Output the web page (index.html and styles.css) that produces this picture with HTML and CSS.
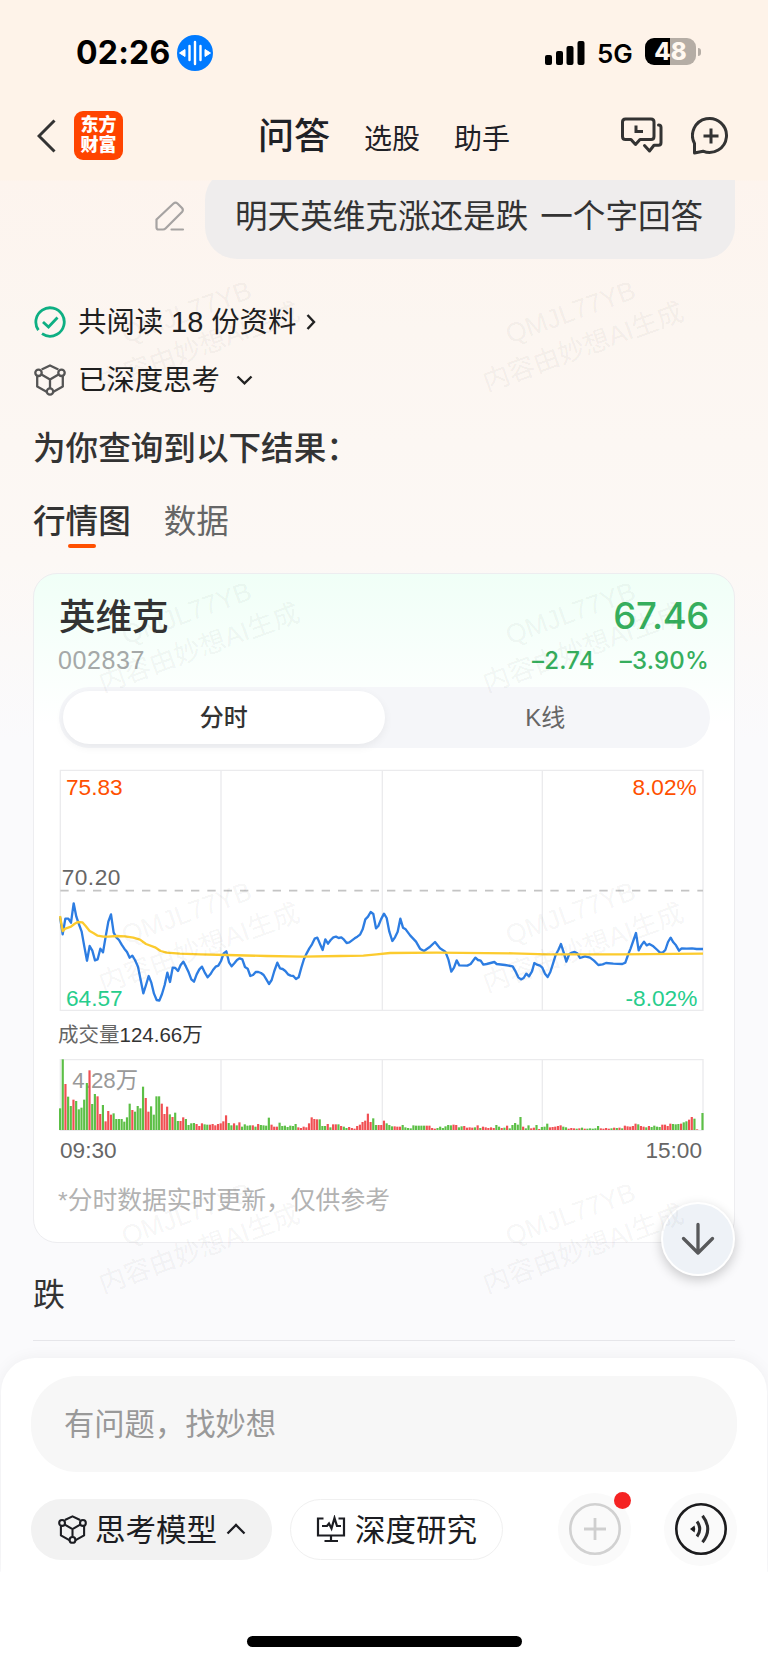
FILE: index.html
```html
<!DOCTYPE html>
<html lang="zh-CN">
<head>
    <meta charset="UTF-8">
    <meta name="viewport" content="width=device-width, initial-scale=1.0">
    <title>妙想问答</title>
    <link rel="stylesheet" href="styles.css">
</head>
<body>
    <svg width="0" height="0" class="defs">
        <symbol id="cube" viewBox="0 0 32 32">
            <g fill="none" stroke="currentColor" stroke-width="2.3" stroke-linejoin="round">
                <path d="M7.600 5.500 L16 1.500 L24.400 5.500 M3.200 12 V22.500 L13 28 M28.800 12 V22.500 L19 28 M7.500 10.600 L16 15.600 L24.500 10.600 M16 15.600 V24"/>
                <circle cx="4.500" cy="8.800" r="3.200"/>
                <circle cx="27.500" cy="8.800" r="3.200"/>
                <circle cx="16" cy="27.500" r="3.200"/>
            </g>
        </symbol>
    </svg>

    <header class="header">
        <div class="status">
            <span class="time">02:26</span>
            <svg class="voice-badge" width="36" height="36" viewBox="0 0 36 36">
                <circle cx="18" cy="18" r="18" fill="#007aff"/>
                <path d="M12.500 11 V25 M18 7 V29 M23.500 11 V25" stroke="#fff" stroke-width="2.4" stroke-linecap="round"/>
                <path d="M2.500 18 L8 14.500 V21.500 Z M33.500 18 L28 14.500 V21.500 Z" fill="#fff" stroke="#fff" stroke-linejoin="round"/>
            </svg>
            <svg class="signal" width="40" height="24" viewBox="0 0 40 24">
                <rect x="0" y="14" width="7" height="10" rx="2"/>
                <rect x="11" y="10" width="7" height="14" rx="2"/>
                <rect x="21.500" y="5" width="7" height="19" rx="2"/>
                <rect x="32.500" y="0" width="7" height="24" rx="2"/>
            </svg>
            <span class="network">5G</span>
            <span class="battery">48</span>
            <span class="battery-tip"></span>
        </div>
        <nav class="nav">
            <svg class="back" width="20" height="34" viewBox="0 0 20 34">
                <path d="M17.500 1.500 L2 17 L17.500 32.500" fill="none" stroke="#333" stroke-width="3"/>
            </svg>
            <div class="logo">东方<br>财富</div>
            <span class="nav-item current">问答</span>
            <span class="nav-item">选股</span>
            <span class="nav-item">助手</span>
            <svg class="history" width="44" height="38" viewBox="0 0 44 38">
                <g fill="none" stroke="#333" stroke-width="3" stroke-linejoin="round" stroke-linecap="round">
                    <path d="M5.500 2 H31 Q34 2 34 5 V19.500 Q34 22.500 31 22.500 H20 L15.500 27.500 L11 22.500 H5.500 Q2.500 22.500 2.500 19.500 V5 Q2.500 2 5.500 2 Z"/>
                    <path d="M38.500 8 Q41 8 41 10.500 V25.500 Q41 28.300 38.500 28.300 H34 L29.500 34 L24.500 28.500"/>
                    <path d="M16 8.500 V14.500 H23" stroke-linejoin="miter" stroke-linecap="butt"/>
                </g>
            </svg>
            <svg class="new-chat" width="40" height="40" viewBox="0 0 40 40">
                <path d="M3.500 27.500 A17 17 0 1 1 12 35.200 L3.500 37 Z" fill="none" stroke="#333" stroke-width="3" stroke-linejoin="round"/>
                <path d="M20 12.500 V27.500 M12.500 20 H27.500" stroke="#333" stroke-width="3"/>
            </svg>
        </nav>
    </header>

    <main class="chat">
        <div class="question">
            <svg class="edit" width="30" height="30" viewBox="0 0 30 30">
                <path d="M1.500 18.500 L18.500 2.500 Q20.500 0.800 22.500 2.500 L27 7 Q28.700 9 27 11 L10.500 27.500 Q9.500 28.500 8 28.500 H3.500 Q1.500 28.500 1.500 26.500 Z M16.500 28.500 H28" fill="none" stroke="#a6a3a2" stroke-width="2.200" stroke-linecap="round"/>
            </svg>
            <div class="bubble">明天英维克涨还是跌 一个字回答</div>
        </div>

        <div class="step">
            <svg class="step-icon" width="32" height="32" viewBox="0 0 32 32">
                <g fill="none" stroke="#0eaf83" stroke-width="2.800">
                    <path d="M4.400 24.100 A14.200 14.200 0 1 1 23.100 28.300 A14.200 14.200 0 0 1 8 27.700"/>
                    <path d="M9 16 L14.500 21 L23.500 11.500"/>
                </g>
            </svg>
            <span>共阅读 <i class="count">18</i> 份资料</span>
            <svg class="right" width="10" height="18" viewBox="0 0 10 18">
                <path d="M1.500 2 L8 9 L1.500 16" fill="none" stroke="#222" stroke-width="2.400"/>
            </svg>
        </div>
        <div class="step">
            <svg class="step-icon thinking" width="32" height="32"><use href="#cube"/></svg>
            <span>已深度思考</span>
            <svg class="down" width="17" height="10" viewBox="0 0 17 10">
                <path d="M1.500 1.500 L8.500 8.300 L15.500 1.500" fill="none" stroke="#222" stroke-width="2.400"/>
            </svg>
        </div>

        <h2 class="result-title">为你查询到以下结果：</h2>
        <div class="tabs">
            <span class="tab active">行情图</span>
            <span class="tab">数据</span>
        </div>

        <section class="card">
            <div class="quote">
                <span class="stock-name">英维克</span>
                <span class="price">67.46</span>
            </div>
            <div class="quote-sub">
                <span class="code">002837</span>
                <span class="change">–2.74</span>
                <span class="change percent">–3.90%</span>
            </div>
            <div class="segment">
                <span class="segment-item on">分时</span>
                <span class="segment-item">K线</span>
            </div>

            <svg class="price-chart" width="646" height="243" viewBox="0 0 1938 729">
                <path class="grid" d="M4 4 H1932 V724 H4 Z M486 4 V724 M970 4 V724 M1450 4 V724"/>
                <path class="mid" d="M4 365 H1932"/>
                <text class="up" x="21" y="78">75.83</text>
                <text class="up" x="1913" y="78" text-anchor="end">8.02%</text>
                <text class="base" x="8" y="348" textLength="176">70.20</text>
                <text class="low" x="21" y="711">64.57</text>
                <text class="low" x="1915" y="711" text-anchor="end">-8.02%</text>
                <g transform="translate(-57 303)">
                    <polyline class="line-price" points="60,140 68,193 76,146 85,146 93,158 101,100 109,140 117,163 125,185 133,230 141,272 149,228 157,242 165,271 173,268 181,236 189,247 197,200 205,155 213,133 221,188 229,202 237,210 245,224 253,236 261,246 269,263 277,257 285,270 294,290 302,330 310,370 318,345 326,318 334,338 342,371 350,390 358,392 366,372 374,345 382,308 390,336 398,293 406,294 414,303 422,285 430,275 438,290 446,307 454,328 462,335 470,313 478,298 486,290 494,307 503,322 511,313 519,300 527,290 535,287 543,273 551,250 559,244 567,277 575,289 583,280 591,270 599,265 607,268 615,291 623,296 631,318 639,315 647,306 655,306 663,309 671,315 679,328 687,342 695,330 703,303 712,278 720,295 728,297 736,303 744,313 752,317 760,318 768,327 776,322 784,293 792,267 800,250 808,235 816,223 824,206 832,203 840,222 848,240 856,208 864,221 872,210 880,202 888,200 896,204 904,202 912,209 920,219 928,217 936,211 944,205 952,200 960,194 968,178 976,148 984,140 992,126 1000,132 1008,175 1015,168 1023,148 1032,131 1040,144 1048,185 1057,213 1065,202 1073,185 1081,146 1089,173 1097,178 1111,197 1128,215 1140,236 1152,243 1168,232 1185,216 1200,235 1216,245 1225,268 1234,305 1242,293 1250,271 1258,286 1282,287 1292,282 1306,263 1314,270 1322,272 1330,284 1340,282 1363,276 1370,282 1395,285 1418,289 1427,305 1435,322 1443,328 1451,324 1459,311 1467,319 1476,304 1483,279 1491,284 1500,287 1507,293 1515,311 1523,321 1531,306 1539,281 1547,255 1555,240 1563,222 1571,247 1579,275 1588,252 1596,248 1604,246 1612,250 1620,264 1635,259 1650,263 1662,272 1675,285 1688,283 1698,279 1720,281 1747,282 1756,278 1764,255 1772,235 1788,189 1796,241 1804,226 1812,215 1820,226 1828,222 1840,229 1852,240 1860,248 1868,248 1876,240 1884,216 1892,203 1900,217 1908,226 1917,242 1925,235 1940,236 1956,235 1970,237 1989,237"/>
                    <polyline class="line-avg" points="60,138 68,183 76,176 93,170 103,162 113,156 127,157 137,168 149,183 160,189 173,197 190,200 205,200 230,198 255,199 280,203 300,209 318,222 345,232 362,243 380,248 420,251 480,253 560,255 680,258 790,260 900,258 970,257 1010,253 1050,249 1190,248 1420,250 1520,253 1740,253 1989,251"/>
                </g>
            </svg>

            <div class="volume-title">成交量<b>124.66万</b></div>
            <svg class="volume-chart" width="646" height="72" viewBox="0 0 1938 216">
                <path class="grid" d="M4 2 H1932 V214 H4 Z M486 2 V214 M970 2 V214 M1450 2 V214"/>
                <text class="max" x="40" y="87">4.28万</text>
                <g id="volumeBars"></g>
            </svg>
            <div class="hours">
                <span>09:30</span>
                <span>15:00</span>
            </div>
            <p class="note">*分时数据实时更新，仅供参考</p>
        </section>

        <p class="answer">跌</p>
        <hr class="divider">

        <div class="to-bottom">
            <svg width="36" height="36" viewBox="0 0 36 36">
                <path d="M18 3.500 V32 M3.500 17.500 L18 32 L32.500 17.500" fill="none" stroke="#58595b" stroke-width="3.300" stroke-linecap="round" stroke-linejoin="round"/>
            </svg>
        </div>

        <div class="watermarks">
            <div class="mark">QMJL77YB<br>内容由妙想AI生成</div>
            <div class="mark">QMJL77YB<br>内容由妙想AI生成</div>
            <div class="mark">QMJL77YB<br>内容由妙想AI生成</div>
            <div class="mark">QMJL77YB<br>内容由妙想AI生成</div>
            <div class="mark">QMJL77YB<br>内容由妙想AI生成</div>
            <div class="mark">QMJL77YB<br>内容由妙想AI生成</div>
            <div class="mark">QMJL77YB<br>内容由妙想AI生成</div>
            <div class="mark">QMJL77YB<br>内容由妙想AI生成</div>
        </div>
    </main>

    <footer class="composer">
        <div class="input">有问题，找妙想</div>
        <div class="tools">
            <div class="chip selected">
                <svg class="chip-icon" width="29" height="29"><use href="#cube"/></svg>
                <span>思考模型</span>
                <svg class="chip-arrow" width="20" height="12" viewBox="0 0 20 12">
                    <path d="M1.500 10.500 L10 2 L18.500 10.500" fill="none" stroke="#1c1d22" stroke-width="2.300"/>
                </svg>
            </div>
            <div class="chip research">
                <svg class="chip-icon" width="30" height="28" viewBox="0 0 30 28">
                    <path d="M7.500 3.500 H2 V20.500 H28 V3.500 H22.500 M15 20.500 V26 M8.500 26 H22 M6 11 H11 L13 8.500 L15.500 13.500 L18.500 3 L21 11 H25" fill="none" stroke="#1c1d22" stroke-width="2.200"/>
                </svg>
                <span>深度研究</span>
            </div>
            <div class="round add">
                <svg width="54" height="54" viewBox="0 0 54 54">
                    <circle cx="27" cy="27" r="24.700" fill="none" stroke="#d1d1d1" stroke-width="2.600"/>
                    <path d="M27 16 V38 M16 27 H38" stroke="#cfcfcf" stroke-width="2.800"/>
                </svg>
            </div>
            <div class="round">
                <svg width="54" height="54" viewBox="0 0 54 54">
                    <circle cx="27" cy="27" r="24.700" fill="none" stroke="#1b1b1d" stroke-width="2.600"/>
                    <path d="M16 27 L20.500 23.500 Q22 27 20.500 30.500 Z" fill="#1b1b1d"/>
                    <path d="M23 19.500 Q28.500 27 23 34.500 M28.500 13.800 Q39 27 28.500 40.200" fill="none" stroke="#2c2c2e" stroke-width="3"/>
                </svg>
            </div>
        </div>
    </footer>
    <div class="home-bar"></div>

    <script src="script.js"></script>
</body>
</html>
```
FILE: styles.css
```css
* { box-sizing: border-box; }
body { margin: 0; width: 768px; height: 1663px; overflow: hidden; font-family: "Liberation Sans", "Noto Sans CJK SC", sans-serif; color: #333; background: linear-gradient(#fef3e9 0, #fef3e9 180px, #fdf4ee 181px, #fcf6f1 330px, #fcf8f5 560px, #fafafc 740px, #fafafc 1571px, #fff 1572px); }
.defs { position: absolute; }
h2, p { margin: 0; font-weight: 400; }

.header { height: 180px; }
.status { display: flex; align-items: center; height: 96px; padding: 10px 67px 0 76px; font-family: Inter, sans-serif; color: #000; }
.time { width: 101px; margin-top: -1px; font-size: 32px; font-weight: 700; letter-spacing: 0.2px; }
.signal { margin: -1px 12px 0 auto; }
.network { width: 48px; margin-top: -2px; font-size: 26px; font-weight: 600; padding-top: 2px; }
.battery { width: 51px; height: 27px; margin-top: -3px; border-radius: 9px; background: linear-gradient(90deg, #000 49%, #b5ada5 49%); color: #fff8f0; font-size: 24px; font-weight: 800; line-height: 27px; text-align: center; }
.battery-tip { width: 3px; height: 8px; margin: -3px 0 0 2px; border-radius: 0 4px 4px 0; background: #b5ada5; }

.nav { display: flex; align-items: center; height: 80px; padding: 0 37px; color: #1f2126; }
.logo { width: 49px; height: 49px; margin: -1px 135px 0 17px; padding-top: 4px; border-radius: 9px; background: #ff4400; color: #fff; font-size: 18px; font-weight: 900; line-height: 20px; text-align: center; }
.nav-item { width: 90px; font-size: 28px; padding-top: 8px; line-height: 40px; }
.nav-item.current { width: 106px; font-size: 36px; font-weight: 500; padding-top: 2px; }
.history { margin-left: auto; }
.new-chat { margin-left: 27px; }

.chat { position: relative; height: 1178px; padding: 0 33px; overflow: hidden; }
.question { display: flex; justify-content: flex-end; height: 91px; margin-top: -12px; }
.edit { margin: 33px 20px 0 0; }
.bubble { width: 530px; padding: 7px 0 0 30px; border-radius: 32px 4px 32px 32px; background: #efeded; font-size: 32.6px; line-height: 84px; word-spacing: 3px; white-space: nowrap; }

.step { display: flex; align-items: center; height: 58px; font-size: 28.4px; line-height: 40px; color: #1f1f1f; }
.question + .step { margin-top: 34px; }
.step-icon { margin: 0 12px 0 1px; }
.count { font-style: normal; font-size: 29px; }
.thinking { color: #555; }
.right { margin-left: 10px; }
.down { margin-left: 16px; }

.result-title { margin-top: 10px; font-size: 32.6px; font-weight: 500; line-height: 60px; }
.tabs { display: flex; gap: 33px; margin-top: 13px; font-size: 32.6px; line-height: 60px; }
.tab { position: relative; color: #666; }
.tab.active { color: #333; font-weight: 500; }
.tab.active::after { content: ""; position: absolute; left: 35px; top: 52px; width: 28px; height: 4px; border-radius: 2px; background: #ff5000; }

.card { width: 702px; height: 670px; margin-top: 21px; padding: 17px 24px 0 25px; border: 1px solid #ededf0; border-radius: 24px; background: linear-gradient(#f0fff7, #fff 150px); }
.quote, .quote-sub { display: flex; align-items: center; padding-right: 1px; }
.quote { justify-content: space-between; height: 50px; }
.stock-name { margin-top: -4px; font-size: 36.5px; font-weight: 500; }
.price, .change { font-family: Inter, sans-serif; font-weight: 500; color: #36ae5d; }
.price { font-size: 36.5px; letter-spacing: -0.3px; }
.quote-sub { height: 36px; margin-top: 1px; }
.code { margin: 0 auto 0 -1px; color: #a5a9a8; font-size: 25px; letter-spacing: 0.6px; }
.change { font-size: 24px; letter-spacing: 0.2px; }
.percent { margin-left: 25px; }

.segment { display: flex; height: 61px; margin-top: 9px; padding: 4px; border-radius: 31px; background: #f5f6f9; font-size: 24px; line-height: 53px; text-align: center; }
.segment-item { width: 322px; color: #666; }
.segment-item.on { border-radius: 27px; background: #fff; color: #333; font-weight: 500; box-shadow: 0 3px 10px rgba(0, 0, 0, 0.06); }

.price-chart, .volume-chart { display: block; }
.price-chart { margin-top: 21px; }
.price-chart text { font-size: 68px; }
.grid { fill: none; stroke: #ebebed; stroke-width: 4; }
.mid { stroke: #c4c4c4; stroke-width: 5; stroke-dasharray: 25 24; }
.up { fill: #ff5000; }
.low { fill: #27cd8c; }
.base { fill: #666; }
.line-price, .line-avg { fill: none; stroke-linejoin: round; }
.line-price { stroke: #2d7de2; stroke-width: 7; }
.line-avg { stroke: #fccb2e; stroke-width: 7; }
.volume-title { margin: 8px 0 0 -1px; font-size: 20.5px; line-height: 30px; color: #666; }
.volume-title b { font-weight: 400; color: #333; }
.volume-chart { margin-top: 9px; }
.max { fill: #999; font-size: 67px; }
.bar-up { fill: #f14f53; }
.bar-down { fill: #5cbf46; }
.hours { display: flex; justify-content: space-between; margin-top: 5px; padding: 0 8px 0 1px; font-size: 22.6px; line-height: 30px; color: #666; }
.note { margin: 15px 0 0 -1px; font-size: 24.8px; line-height: 40px; color: #b2b2b2; }

.answer { margin-top: 22px; font-size: 32px; line-height: 60px; }
.divider { height: 1px; margin: 15px 0 0; border: 0; background: #e6e6ea; }
.to-bottom { position: absolute; left: 661px; top: 1022px; display: flex; align-items: center; justify-content: center; width: 74px; height: 74px; border: 2px solid #fff; border-radius: 50%; background: #eef2f7; box-shadow: 0 4px 12px rgba(0, 0, 0, 0.2); }

.watermarks { position: absolute; inset: 0; display: grid; grid-template-columns: 384px 384px; grid-auto-rows: 300.5px; pointer-events: none; }
.mark { width: 240px; height: 74px; margin: 113px 0 0 73px; font-size: 26.6px; line-height: 37px; text-align: center; color: rgba(0, 0, 0, 0.055); transform: rotate(-20deg); }

.composer { position: relative; height: 214px; margin: 0 1px; padding: 18px 30px 0; border-radius: 34px 34px 0 0; background: #fff; box-shadow: 0 0 16px rgba(0, 0, 0, 0.05); clip-path: inset(-30px -1px 0); }
.input { height: 96px; padding-left: 33px; border-radius: 46px; background: #f7f7f7; color: #999; font-size: 30.3px; line-height: 97px; }
.tools { display: flex; align-items: center; height: 74px; margin-top: 20px; }
.chip { display: flex; align-items: center; height: 61px; border-radius: 31px; font-size: 30.5px; color: #1c1d22; }
.chip span { margin-top: -3px; }
.chip.selected { width: 241px; padding-left: 27px; background: #f2f2f2; }
.chip.research { width: 213px; margin-left: 18px; padding-left: 25px; border: 1px solid #f0f0f0; }
.selected .chip-icon { margin-right: 8px; }
.research .chip-icon { margin-right: 9px; }
.chip-arrow { margin-left: 9px; }
.round { position: relative; display: flex; align-items: center; justify-content: center; width: 73px; height: 73px; margin-left: 33px; border-radius: 50%; background: #fafafa; }
.round.add { margin-left: auto; }
.round.add::after { content: ""; position: absolute; right: 0; top: -1px; width: 17px; height: 17px; border-radius: 50%; background: #f52323; }
.home-bar { width: 275px; height: 11px; margin: 64px auto 0; border-radius: 6px; background: #000; }
```
FILE: script.js
```js
// one bar per minute, positive = red, negative = green
const volumes = [
    -65, -212, 138, -100, -72, 91, -87, -62, -67, -91, -141, 179, -78, -108, 101, 48, -75, 26, 57, 46,
    -50, -33, -33, -33, -25, -38, -79, 60, -55, -72, -65, -130, 96, 55, -71, -46, -101, -101, 79, 48,
    70, -47, 39, -52, -27, 27, 38, -33, -15, -20, -21, 18, 12, 20, -17, -16, 16, 18, 14, 18,
    20, 26, 44, -21, -14, 20, -14, 23, -10, -17, -13, -14, 14, -10, 18, -15, -14, -13, -37, 16,
    10, 10, -22, -12, -13, -9, -13, -12, -18, 8, 6, 10, 8, 20, 38, 33, 32, -32, -12, -12,
    18, -8, 17, 17, -17, 12, -10, -6, 9, 6, 4, 12, 16, 24, 28, 49, 24, -35, -15, 15,
    15, 28, -20, -15, -11, 11, 10, 10, -15, -8, -6, -5, -14, -13, -13, -13, -13, 13, 13, 6,
    4, -6, -10, -6, -11, -15, -14, 16, 15, -8, -11, 12, 7, 8, 7, -8, 14, -6, 10, 8,
    6, 8, 6, -15, -10, 6, -7, 13, -5, -15, -21, -16, -39, 10, -5, -14, 5, 7, -15, 3,
    -9, -10, -19, 8, 9, 10, 12, 14, -10, -8, 4, 6, 5, -4, 5, -7, 4, -4, -5, -4,
    -5, -12, 5, 4, 6, 4, -5, 7, -6, 7, -5, 13, 11, 10, 12, 19, -17, 12, 10, -8,
    12, -9, -13, -10, -9, 16, 16, 12, 19, -18, -17, -18, 19, -23, -26, 31, 39, -34, 2, 0, -51
];

const bars = document.getElementById('volumeBars');
volumes.forEach((value, i) => {
    const bar = document.createElementNS('http://www.w3.org/2000/svg', 'rect');
    const height = Math.abs(value);
    bar.setAttribute('class', value > 0 ? 'bar-up' : 'bar-down');
    bar.setAttribute('x', (i * 8.03).toFixed(1));
    bar.setAttribute('y', 213 - height);
    bar.setAttribute('width', 6.5);
    bar.setAttribute('height', height);
    bars.appendChild(bar);
});
```
